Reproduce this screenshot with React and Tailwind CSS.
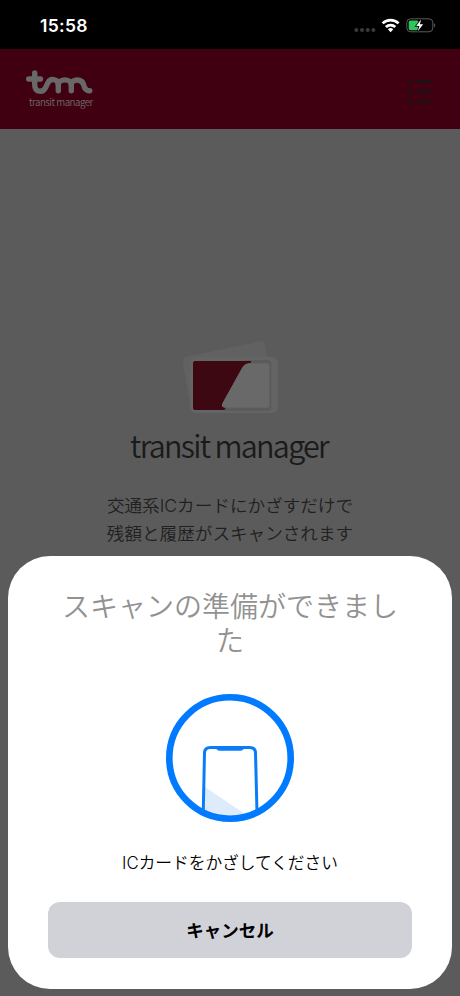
import React from "react";

const JP_FONT = "font-['Inter','Noto_Sans_CJK_JP',sans-serif]";

function StatusBar() {
  return (
    <div className="flex h-[49px] items-start justify-between bg-black pl-[40px] pr-[24px] text-white">
      <div className="mt-[14px] font-['Inter',sans-serif] text-[17.5px] leading-6 font-semibold tracking-[0.3px]">
        15:58
      </div>
      <svg className="mt-[15px]" width="82" height="20" viewBox="354 15 82 20">
        <g fill="#3a3a3a">
          <circle cx="356.3" cy="30" r="2" />
          <circle cx="362" cy="30" r="2" />
          <circle cx="367.7" cy="30" r="2" />
          <circle cx="373.4" cy="30" r="2" />
        </g>
        {/* wifi */}
        <g fill="none" stroke="#fff" strokeWidth="2.7">
          <path d="M382.6 23.4a11.5 11.5 0 0 1 16 0" />
          <path d="M385.9 27.1a6.8 6.8 0 0 1 9.4 0" />
        </g>
        <path d="M390.6 32.2l-2.7-2.9a3.9 3.9 0 0 1 5.4 0z" fill="#fff" />
        {/* battery */}
        <rect x="406.8" y="18.8" width="26" height="13" rx="3.8" fill="none" stroke="#5c5c5c" />
        <path d="M434 23.2c1.6.6 1.6 3.6 0 4.2z" fill="#5c5c5c" />
        <rect x="408.7" y="20.5" width="10" height="9.7" rx="1.8" fill="#30c45a" />
        <path
          d="M421.2 19.2l-5 6.8h3.2l-1.6 5.2 5.4-7h-3.4z"
          fill="#fff"
          stroke="#000"
          strokeWidth="1.6"
          paintOrder="stroke"
        />
      </svg>
    </div>
  );
}

function Header() {
  return (
    <header className="flex h-20 items-start justify-between bg-[#400012] pl-[25px] pr-[27px]">
      <div className="pt-[20px]">
        <svg width="70" height="26" viewBox="25 69 70 26">
          <g fill="none" stroke="#686868" strokeWidth="5.4" strokeLinecap="round" strokeLinejoin="round">
            <path d="M28.7 79H40.5" />
            <path d="M34.7 73v11.5c0 8.6 8.4 8.3 11 2.8l2.3-4.7c2.2-4.5 9.6-4.1 10.3 1.5v6.7" />
            <path d="M58.3 84.5c.8-6.2 12.4-6.2 13 0v6.3" />
            <path d="M71.3 84.5c.8-6.2 10.8-5.7 12.2 0 .8 3.8 2.6 6.3 6.2 6.3" />
          </g>
        </svg>
        <div className="mt-[1px] ml-[4px] w-[70px] font-['Noto_Sans_CJK_JP','Open_Sans',sans-serif] text-[9.7px] leading-[13px] font-[350] tracking-[-0.48px] whitespace-nowrap text-[#706a6c]">
          transit manager
        </div>
      </div>
      <svg className="mt-[30px]" width="26" height="26" viewBox="407 79 26 26">
        <g fill="#1c1114">
          <rect x="408" y="80" width="4" height="4" />
          <rect x="408" y="90" width="4" height="4" />
          <rect x="408" y="100" width="4" height="4" />
          <rect x="417" y="80" width="14" height="3" />
          <rect x="417" y="90" width="13" height="3" />
          <rect x="417" y="100" width="13" height="3" />
        </g>
      </svg>
    </header>
  );
}

function CardLogo() {
  return (
    <svg width="98" height="76" viewBox="181 339 98 76">
      <path
        d="M187 356.5l74-15.3q3-.6 3.7 2.2l12 55-83 10q-3.5-6-5-13l-6-33q-.6-5 4.3-5.9z"
        fill="#616161"
      />
      <rect x="190" y="357" width="88" height="56" rx="6" fill="#646464" />
      <path d="M245 361.5h23q2 0 2 2v44q0 2-2 2h-44" fill="none" stroke="#5a5a5a" strokeWidth="2.5" />
      <path
        d="M195 361h56v2c-5 0-7 1.5-9 5l-19.5 35c-1.5 3 0 4.5 3 5l-1 2H195q-2 0-2-2v-45q0-2 2-2z"
        fill="#3e0812"
      />
      <path
        d="M249 364h18q2.5 0 2.5 2.5v38q0 2.5-2.5 2.5h-42q-4 0-2.4-3.5l19-34.5q2.6-5 7.4-5z"
        fill="#696969"
      />
    </svg>
  );
}

function Home() {
  return (
    <main className="flex flex-1 flex-col items-center bg-[#5b5b5b] pt-[210px]">
      <CardLogo />
      <h1 className="mt-[8px] pr-[2px] font-['Noto_Sans_CJK_JP','Open_Sans',sans-serif] text-[30.5px] leading-[44px] font-[350] tracking-[-1.7px] text-[#1a1a1a]">
        transit manager
      </h1>
      <p className={`mt-[25px] text-center text-[17.6px] leading-[28px] font-[350] text-[#202020] ${JP_FONT}`}>
        交通系ICカードにかざすだけで
        <br />
        残額と履歴がスキャンされます
      </p>
    </main>
  );
}

function ScanIcon() {
  return (
    <svg width="128" height="128" viewBox="166 694 128 128">
      <defs>
        <clipPath id="ring">
          <circle cx="230" cy="758" r="60" />
        </clipPath>
      </defs>
      <g clipPath="url(#ring)">
        <path d="M205 787l40 27v10h-42z" fill="#deebfa" />
        <path
          d="M203 824l1.5-71q0-5.5 6-5.5h39q6 0 6 5.5l1.8 71"
          fill="none"
          stroke="#0a7cf8"
          strokeWidth="3"
        />
        <path d="M216 747h28q0 3.8-4 3.8h-20q-4 0-4-3.8z" fill="#0a7cf8" />
      </g>
      <circle cx="230" cy="758" r="60.7" fill="none" stroke="#007aff" strokeWidth="6.6" />
    </svg>
  );
}

function ScanSheet() {
  return (
    <div
      role="dialog"
      className={`absolute inset-x-2 top-[556px] bottom-[7px] flex flex-col items-center rounded-[42px] bg-white px-10 pt-[34px] ${JP_FONT}`}
    >
      <h2 className="text-center text-[28px] leading-[34px] font-[350] text-[#929292]">
        スキャンの準備ができまし
        <br />た
      </h2>
      <div className="mt-[36px]">
        <ScanIcon />
      </div>
      <p className="mt-[29px] text-[16.7px] leading-6 font-[350] text-black">ICカードをかざしてください</p>
      <button className="mt-[27px] h-[56px] w-full rounded-xl bg-[#d1d2d8] pt-[2px] text-[17.5px] font-bold text-black">
        キャンセル
      </button>
    </div>
  );
}

export default function App() {
  return (
    <div className="relative flex h-[996px] w-[460px] flex-col overflow-hidden bg-[#5b5b5b]">
      <StatusBar />
      <Header />
      <Home />
      <ScanSheet />
    </div>
  );
}
